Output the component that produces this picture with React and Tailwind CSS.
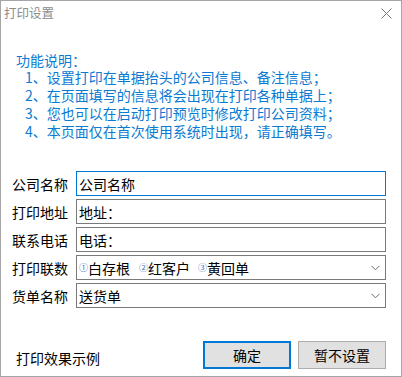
import React from "react";

const FONT = { fontFamily: '"Noto Sans CJK SC", "Noto Sans", sans-serif' };

function Chevron() {
  return (
    <svg width="9" height="6" viewBox="0 0 9 6" className="shrink-0">
      <path d="M0.5 0.8 L4.5 4.8 L8.5 0.8" fill="none" stroke="#6b6b6b" strokeWidth="1" />
    </svg>
  );
}

function Row({ label, children }) {
  return (
    <div className="flex items-center pl-[11px]">
      <div className="w-[64px] text-[14px] leading-[18px] text-black">{label}</div>
      {children}
    </div>
  );
}

function Item({ n, text, className }) {
  return (
    <span className={"inline-flex items-center " + (className || "")}>
      <span className="w-[9px] text-[9px] leading-[10px] text-[#3f74b5] text-center">{n}</span>
      <span>{text}</span>
    </span>
  );
}

export default function App() {
  return (
    <div
      className="w-[402px] h-[377px] border border-[#a6a6a6] bg-white flex flex-col overflow-hidden"
      style={FONT}
    >
      <div className="h-[24px] flex items-center justify-between pl-[3px] pr-[9px]">
        <span className="text-[12.5px] leading-[16px] text-[#8c8c8c]">打印设置</span>
        <svg width="11" height="11" viewBox="0 0 11 11">
          <path d="M0.5 0.5 L10.5 10.5 M10.5 0.5 L0.5 10.5" stroke="#7a7a7a" strokeWidth="1" />
        </svg>
      </div>

      <div className="mt-[28px] pl-[15px] text-[14px] text-[#0b7ad1]">
        <div className="leading-[15px]">功能说明：</div>
        <div className="pl-[9px] leading-[18px]">
          <div>1、设置打印在单据抬头的公司信息、备注信息；</div>
          <div>2、在页面填写的信息将会出现在打印各种单据上；</div>
          <div>3、您也可以在启动打印预览时修改打印公司资料；</div>
          <div>4、本页面仅在首次使用系统时出现，请正确填写。</div>
        </div>
      </div>

      <div className="mt-[31px] flex flex-col gap-[3px] text-[14px]">
        <Row label="公司名称">
          <div className="w-[310px] h-[25px] border border-[#0078d7] flex items-center pl-[2px] leading-[18px]">
            公司名称
          </div>
        </Row>
        <Row label="打印地址">
          <div className="w-[310px] h-[25px] border border-[#7a7a7a] flex items-center pl-[2px] leading-[18px]">
            地址：
          </div>
        </Row>
        <Row label="联系电话">
          <div className="w-[310px] h-[25px] border border-[#7a7a7a] flex items-center pl-[2px] leading-[18px]">
            电话：
          </div>
        </Row>
        <Row label="打印联数">
          <div className="w-[310px] h-[25px] border border-[#7a7a7a] flex items-center pl-[2px] pr-[5px] leading-[18px]">
            <div className="flex-1 flex items-center">
              <Item n="①" text="白存根" />
              <Item n="②" text="红客户" className="ml-[9px]" />
              <Item n="③" text="黄回单" className="ml-[8px]" />
            </div>
            <Chevron />
          </div>
        </Row>
        <Row label="货单名称">
          <div className="w-[310px] h-[25px] border border-[#7a7a7a] flex items-center pl-[2px] pr-[5px] leading-[18px]">
            <div className="flex-1">送货单</div>
            <Chevron />
          </div>
        </Row>
      </div>

      <div className="mt-[33px] flex items-start pl-[15px] pr-[15px] text-[14px]">
        <div className="mt-[8px] leading-[18px] text-black">打印效果示例</div>
        <div className="ml-auto flex gap-[7px]">
          <div className="w-[88px] h-[28px] border-2 border-[#0078d7] bg-[#e1e1e1] flex items-center justify-center leading-[18px]">
            确定
          </div>
          <div className="w-[88px] h-[28px] border border-[#adadad] bg-[#e1e1e1] flex items-center justify-center leading-[18px]">
            暂不设置
          </div>
        </div>
      </div>
    </div>
  );
}
